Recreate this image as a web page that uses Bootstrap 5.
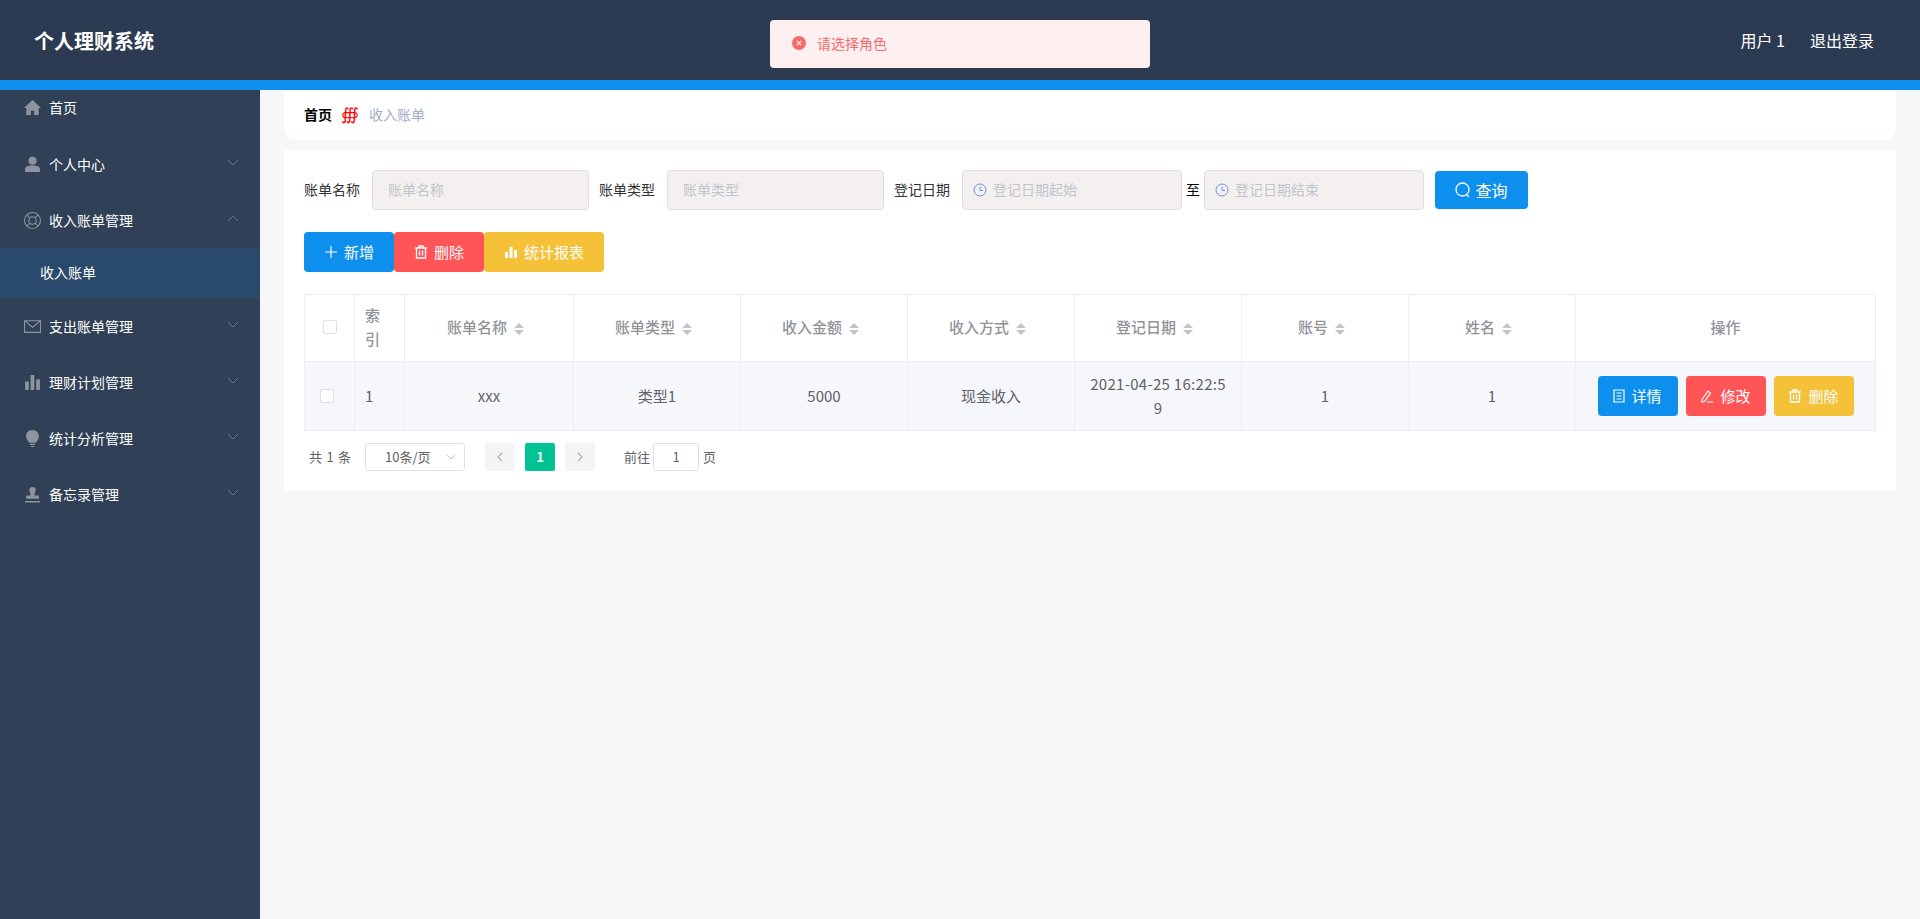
<!DOCTYPE html>
<html lang="zh-CN">
<head>
<meta charset="UTF-8"/>
<title>个人理财系统</title>
<link href="https://cdn.jsdelivr.net/npm/bootstrap@5.3.3/dist/css/bootstrap.min.css" rel="stylesheet"/>
<style>
  html,body{height:100%;overflow:hidden}
  body{background:#f6f7f9;color:#333;font-family:"Noto Sans CJK SC","Noto Sans",sans-serif;font-size:14px}
  .top-bar{height:90px;background:#2c3b52;border-bottom:10px solid #0d8fee;padding:0 46px 0 34px;position:relative;z-index:2}
  .top-title{font-size:20px;font-weight:700;color:#fff;margin-top:1px}
  .top-links{font-size:16px;color:#fff;gap:25px;margin-top:-1px}
  .toast-msg{position:absolute;left:770px;top:20px;width:380px;height:48px;background:#fef0f0;border-radius:4px;padding:0 0 2px 22px;color:#f56c6c;gap:11px}
  .page-wrap{height:829px}
  .side-menu{width:260px;background:#304056;margin-top:-10px;height:839px;flex:none}
  .menu-row{height:56px;padding:0 21px 2px 24px;color:#fff;gap:8px}
  .menu-row:first-child{margin-bottom:1px}
  .menu-row svg.mi{width:17px;height:17px;fill:#8e949e;stroke:none;flex:none}
  .menu-row .arrow{margin-left:auto;margin-top:-4px}
  .menu-sub{height:50px;margin-top:-1px;margin-bottom:1px;background:#2a4a6b;color:#fff;padding:0 0 2px 40px}
  .main-area{flex:1;padding:0 24px;min-width:0}
  .crumb-box{height:50px;background:#fff;border-radius:0 0 12px 12px;padding:0 20px 2px;margin-bottom:10px}
  .crumb-box .breadcrumb{margin:0;align-items:center;--bs-breadcrumb-divider:none}
  .crumb-home{font-weight:700;color:#000}
  .crumb-sep{color:#f00;font-family:"DejaVu Sans",sans-serif;font-size:17px;line-height:1;margin:0 10px 0 9px}
  .crumb-now{color:#a3aec4}
  .list-box{background:#fff;height:341px;padding:20px}
  .filter-row{height:40px;margin-bottom:22px}
  .filter-label{width:68px;flex:none;color:#333;padding-bottom:2px}
  .form-control.filter-input{width:217px;height:40px;flex:none;margin-right:10px;background:#f4f0f0;border:1px solid #dcdfe6;border-radius:4px;padding:0 15px 2px;font-size:14px}
  .filter-input::placeholder,.date-box span{color:#c0c4cc}
  .date-box{width:220px;height:40px;flex:none;background:#f4f0f0;border:1px solid #dcdfe6;border-radius:4px;padding-left:10px;gap:6px}
  .date-box span{margin-bottom:2px}
  .date-sep{width:22px;flex:none;text-align:center;color:#000;padding-bottom:2px}
  .btn-sky,.btn-coral,.btn-amber{color:#fff;border:0;border-radius:4px;font-size:15px;height:40px;padding:0;display:inline-flex;align-items:center;justify-content:center;gap:6px}
  .btn-sky{background:#0d8fee}
  .btn-coral{background:#ff5557}
  .btn-amber{background:#f5c139}
  .btn-sky:hover{background:#0d8fee;color:#fff}
  .btn-coral:hover{background:#ff5557;color:#fff}
  .btn-amber:hover{background:#f5c139;color:#fff}
  .btn-search{width:93px;height:38px;font-size:16px;margin-left:11px;gap:4px}
  .bill-table{width:1571px;table-layout:fixed;margin-top:22px;margin-bottom:0;font-size:15px;color:#606266;border-color:#ebeef5;text-align:center}
  .bill-table th,.bill-table td{padding:0 10px;vertical-align:middle;line-height:24px;word-break:break-all}
  .bill-table th{height:67px;color:#909399;font-weight:500;background:#fff;padding-bottom:2px}
  .bill-table td{height:69px;background:#f5f7fa;box-shadow:none}
  .bill-table td.date-cell{padding:0 13px;letter-spacing:.3px}
  .sort-icon{display:inline-block;width:10px;height:12px;margin:0 7px}
  .tick{display:block;width:14px;height:14px;background:#fff;border:1px solid #dcdfe6;border-radius:2px;margin:0 auto}
  td .tick{margin-left:5px}
  .row-btn{width:80px}
  .pager-row{height:28px;margin-top:12px;padding-left:5px;font-size:13px;color:#606266}
  .pager-total{word-spacing:1.5px}
  .size-pick{width:100px;height:28px;border:1px solid #dcdfe6;border-radius:3px;margin:0 20px 0 14px;padding:0 8px 0 19px;color:#606266}
  .page-box{width:30px;height:28px;background:#f4f4f5;color:#c0c4cc;border-radius:2px;margin-right:10px}
  .page-box.on{background:#00c292;color:#fff;font-weight:700}
  .goto-text{margin-left:19px}
  .goto-input{width:46px;height:28px;border:1px solid #dcdfe6;border-radius:3px;margin:0 4px 0 3px}
</style>
</head>
<body>
<!-- 顶部 -->
<header class="top-bar d-flex align-items-center justify-content-between">
  <div class="top-title">个人理财系统</div>
  <div class="top-links d-flex"><span>用户 1</span><span>退出登录</span></div>
  <div class="toast-msg d-flex align-items-center">
    <svg width="14" height="14" viewBox="0 0 14 14"><circle cx="7" cy="7" r="7" fill="#f56c6c"/><path d="M4.8 4.8l4.4 4.4M9.2 4.8l-4.4 4.4" stroke="#fef0f0" stroke-width="1.2"/></svg>
    <span>请选择角色</span>
  </div>
</header>

<div class="page-wrap d-flex">
  <!-- 侧边菜单 -->
  <aside class="side-menu" id="sideMenu"></aside>

  <main class="main-area">
    <div class="crumb-box d-flex align-items-center">
      <ol class="breadcrumb">
        <li class="crumb-home">首页</li>
        <li class="crumb-sep">∰</li>
        <li class="crumb-now">收入账单</li>
      </ol>
    </div>

    <div class="list-box">
      <div class="filter-row d-flex align-items-center">
        <span class="filter-label">账单名称</span>
        <input class="form-control filter-input" placeholder="账单名称"/>
        <span class="filter-label">账单类型</span>
        <input class="form-control filter-input" placeholder="账单类型"/>
        <span class="filter-label">登记日期</span>
        <div class="date-box d-flex align-items-center">
          <svg width="14" height="14" viewBox="0 0 14 14" fill="none" stroke="#6d8ee0"><circle cx="7" cy="7" r="6"/><path d="M7 3.5V7.5H10"/></svg>
          <span>登记日期起始</span>
        </div>
        <span class="date-sep">至</span>
        <div class="date-box d-flex align-items-center">
          <svg width="14" height="14" viewBox="0 0 14 14" fill="none" stroke="#6d8ee0"><circle cx="7" cy="7" r="6"/><path d="M7 3.5V7.5H10"/></svg>
          <span>登记日期结束</span>
        </div>
        <button class="btn btn-sky btn-search">
          <svg width="16" height="16" viewBox="0 0 16 16" fill="none" stroke="#fff" stroke-width="1.3"><circle cx="7.5" cy="7.5" r="6.500"/><path d="M11.500 12.500l2.500 2.500"/></svg>
          查询
        </button>
      </div>

      <div class="d-flex">
        <button class="btn btn-sky" style="width:90px">
          <svg width="14" height="14" viewBox="0 0 14 14" stroke="#fff" stroke-width="1.2"><path d="M7 1v12M1 7h12"/></svg>新增
        </button>
        <button class="btn btn-coral" style="width:90px">
          <svg width="14" height="14" viewBox="0 0 14 14" fill="none" stroke="#fff" stroke-width="1.3"><path d="M1 3h12M5 3V1h4v2M2.500 3v10h9V3M5.500 5.500v5M8.500 5.500v5"/></svg>删除
        </button>
        <button class="btn btn-amber" style="width:120px">
          <svg width="14" height="14" viewBox="0 0 14 14" fill="#fff"><path d="M1 7h3v6H1zM5.500 2h3v11h-3zM10 5h3v8h-3z"/></svg>统计报表
        </button>
      </div>

      <table class="table table-bordered bill-table">
        <colgroup id="billCols"></colgroup>
        <thead><tr id="billHead"></tr></thead>
        <tbody>
          <tr>
            <td><span class="tick"></span></td>
            <td class="text-start">1</td>
            <td>xxx</td><td>类型1</td><td>5000</td><td>现金收入</td><td class="date-cell">2021-04-25 16:22:59</td><td>1</td><td>1</td>
            <td>
              <div class="d-flex justify-content-center gap-2">
                <button class="btn btn-sky row-btn">
                  <svg width="12" height="14" viewBox="0 0 12 14" fill="none" stroke="#fff" stroke-width="1.2"><path d="M1 1h10v12H1zM3.500 4h5M3.500 7h5M3.500 10h5"/></svg>详情
                </button>
                <button class="btn btn-coral row-btn">
                  <svg width="14" height="14" viewBox="0 0 14 14" fill="none" stroke="#fff" stroke-width="1.2"><path d="M2 10.500L8 2l2.500 2-6 8.500-2.500.5zM7 13h6"/></svg>修改
                </button>
                <button class="btn btn-amber row-btn">
                  <svg width="14" height="14" viewBox="0 0 14 14" fill="none" stroke="#fff" stroke-width="1.3"><path d="M1 3h12M5 3V1h4v2M2.500 3v10h9V3M5.500 5.500v5M8.500 5.500v5"/></svg>删除
                </button>
              </div>
            </td>
          </tr>
        </tbody>
      </table>

      <div class="pager-row d-flex align-items-center">
        <span class="pager-total">共 1 条</span>
        <div class="size-pick d-flex align-items-center justify-content-between">
          <span>10条/页</span>
          <svg width="10" height="6" viewBox="0 0 10 6" fill="none" stroke="#c0c4cc"><path d="M1 1l4 4 4-4"/></svg>
        </div>
        <div class="page-box d-flex align-items-center justify-content-center">
          <svg width="6" height="10" viewBox="0 0 6 10" fill="none" stroke="#b5b8bf" stroke-width="1.5"><path d="M5 1L1 5l4 4"/></svg>
        </div>
        <div class="page-box on d-flex align-items-center justify-content-center">1</div>
        <div class="page-box d-flex align-items-center justify-content-center">
          <svg width="6" height="10" viewBox="0 0 6 10" fill="none" stroke="#b5b8bf" stroke-width="1.5"><path d="M1 1l4 4-4 4"/></svg>
        </div>
        <span class="goto-text">前往</span>
        <div class="goto-input d-flex align-items-center justify-content-center">1</div>
        <span>页</span>
      </div>
    </div>
  </main>
</div>

<script>
/* 侧边菜单图标 */
const icons = {
  home:'<path d="M8 1L0 8.500h2.200V15h4.300v-4h3v4h4.300V8.500H16z"/>',
  user:'<circle cx="8" cy="4.500" r="3.800"/><path d="M1 15v-2.500C1 10 3.500 9 8 9s7 1 7 3.500V15z"/>',
  ring:'<path fill-rule="evenodd" d="M8 0a8 8 0 1 1 0 16A8 8 0 0 1 8 0zm0 1a7 7 0 1 0 0 14A7 7 0 0 0 8 1zm0 3a4 4 0 1 1 0 8 4 4 0 0 1 0-8zm0 1a3 3 0 1 0 0 6 3 3 0 0 0 0-6z"/><path d="M2.700 3.400l.7-.7 2.400 2.400-.7.7zM10.200 10.900l.7-.7 2.400 2.400-.7.7zM12.600 2.700l.7.7-2.400 2.400-.7-.7zM5.100 10.200l.7.7-2.400 2.400-.7-.7z"/>',
  mail:'<path fill-rule="evenodd" d="M0 2h16v12H0zm1 1.500V13h14V3.500L8 9.500zM2 3l6 5 6-5z"/>',
  bars:'<path d="M1 7h3.500v8H1zM6.200 1h3.500v14H6.200zM11.500 5H15v10h-3.500z"/>',
  bulb:'<path d="M8 0c3.600 0 6 2.600 6 5.800 0 2.600-1.600 4.300-3 6.200H5C3.600 10.100 2 8.400 2 5.800 2 2.600 4.400 0 8 0zM5.500 13h5v1h-5zM6.500 15h3v1h-3z"/>',
  stamp:'<path d="M8 1a3 3 0 0 1 3 3c0 1.500-1 2.300-1 3.500V9h4v3H2V9h4V7.500C6 6.300 5 5.500 5 4a3 3 0 0 1 3-3zM1 14h14v1.500H1z"/>'
};
const menu = [
  {name:'首页', icon:'home'},
  {name:'个人中心', icon:'user', arrow:'down'},
  {name:'收入账单管理', icon:'ring', arrow:'up', sub:'收入账单'},
  {name:'支出账单管理', icon:'mail', arrow:'down'},
  {name:'理财计划管理', icon:'bars', arrow:'down'},
  {name:'统计分析管理', icon:'bulb', arrow:'down'},
  {name:'备忘录管理', icon:'stamp', arrow:'down'}
];
const arrows = {down:'M1 1l5 5 5-5', up:'M1 6l5-5 5 5'};
document.getElementById('sideMenu').innerHTML = menu.map(m => `
  <div class="menu-row d-flex align-items-center">
    <svg class="mi" viewBox="0 0 16 16">${icons[m.icon]}</svg>
    <span>${m.name}</span>
    ${m.arrow ? `<svg class="arrow" width="12" height="7" viewBox="0 0 12 7" fill="none" stroke="#6d7787"><path d="${arrows[m.arrow]}"/></svg>` : ''}
  </div>
  ${m.sub ? `<div class="menu-sub d-flex align-items-center">${m.sub}</div>` : ''}
`).join('');

/* 表头 */
const cols = [
  {w:50, html:'<span class="tick"></span>'},
  {w:50, html:'索引', left:true},
  {w:169, t:'账单名称'},{w:167, t:'账单类型'},{w:167, t:'收入金额'},{w:167, t:'收入方式'},
  {w:167, t:'登记日期'},{w:167, t:'账号'},{w:167, t:'姓名'},{w:300, html:'操作'}
];
const sortIcon = '<svg class="sort-icon" viewBox="0 0 10 12" fill="#c0c4cc"><path d="M5 0l5 5H0zM5 12L0 7h10z"/></svg>';
document.getElementById('billCols').innerHTML = cols.map(c => `<col style="width:${c.w}px">`).join('');
document.getElementById('billHead').innerHTML = cols.map(c =>
  `<th class="${c.left ? 'text-start' : ''}">${c.t ? c.t + sortIcon : c.html}</th>`).join('');
</script>
<script src="https://cdn.jsdelivr.net/npm/bootstrap@5.3.3/dist/js/bootstrap.bundle.min.js"></script>
</body>
</html>
